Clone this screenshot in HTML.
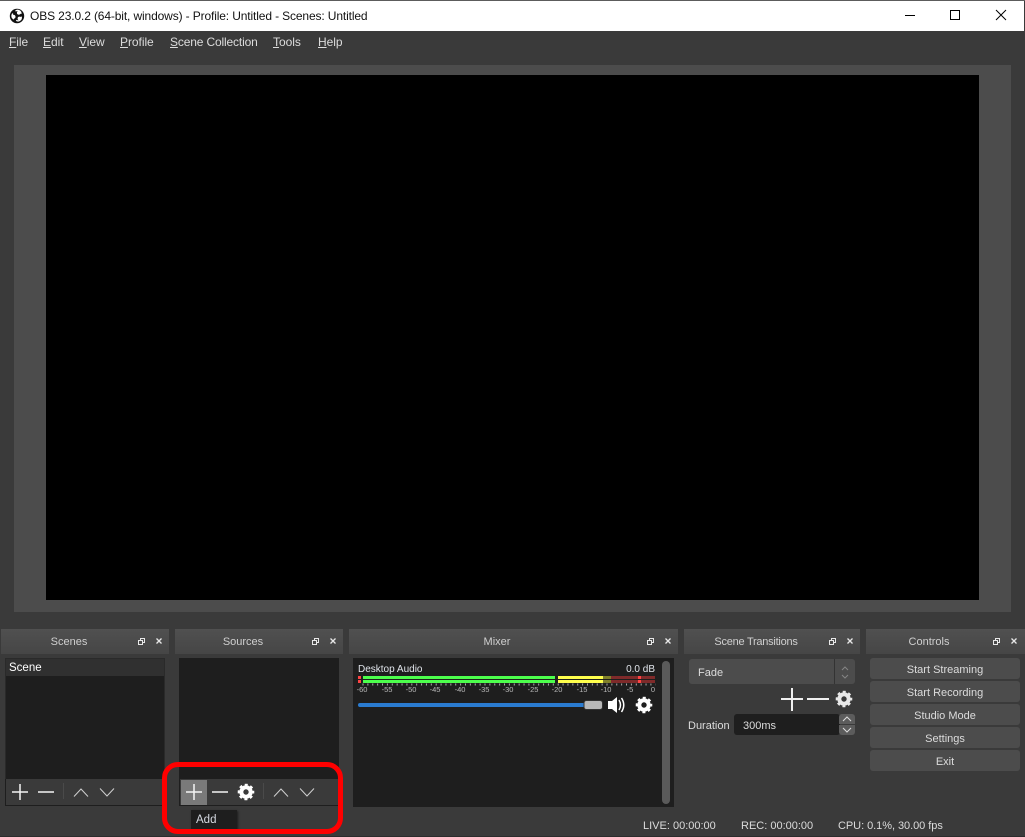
<!DOCTYPE html>
<html><head><meta charset="utf-8"><style>
*{box-sizing:border-box}
html,body{margin:0;padding:0;width:1025px;height:837px;overflow:hidden;background:#3a3a3a}
body{position:relative;font:11px "Liberation Sans",sans-serif;color:#dcdcdc}
.a{position:absolute}
.t{position:absolute;white-space:nowrap;line-height:14px}
.dock{position:absolute;top:629px;height:25px;background:linear-gradient(#505050,#464646);text-align:center;line-height:27px;color:#cfcfcf}
.list{position:absolute;background:#1e1e1e}
.tb{position:absolute;background:#3a3a3a;border:1px solid #1e1e1e;border-top:0;height:27px}
.btn{position:absolute;left:870px;width:150px;height:21px;background:#4c4c4c;border-radius:3px;text-align:center;line-height:24px;color:#dcdcdc}
.m{font-size:12px;top:35px;letter-spacing:-.05px}
svg{position:absolute;overflow:visible}
</style></head><body>
<!-- title bar -->
<div class="a" style="left:0;top:0;width:1025px;height:1px;background:#5c5c5c"></div>
<div class="a" style="left:0;top:1px;width:1024px;height:30px;background:#fff"></div>
<div class="a" style="left:0;top:836px;width:1025px;height:1px;background:#2c2c2c"></div>
<svg style="left:9px;top:8px" width="16" height="16" viewBox="0 0 16 16"><circle cx="8" cy="8" r="7.200" fill="#111"/>
<g fill="none" stroke="#fff" stroke-width="1.300"><path d="M6.500 3.200a3.300 3.300 0 0 1 5.500 2.600"/><path d="M12.200 8.700a3.300 3.300 0 0 1-5 3.600"/><path d="M5 11a3.300 3.300 0 0 1-1-5.400"/></g>
<circle cx="9.800" cy="4.800" r="1.900" fill="#fff"/><circle cx="10.500" cy="10.500" r="1.900" fill="#fff"/><circle cx="4.600" cy="8.800" r="1.900" fill="#fff"/></svg>
<div class="t" style="left:30px;top:9px;color:#111;font-size:12px;letter-spacing:-.13px">OBS 23.0.2 (64-bit, windows) - Profile: Untitled - Scenes: Untitled</div>
<svg style="left:0;top:0" width="1025" height="31"><path d="M905 15.500h10" stroke="#000"/><rect x="950.500" y="10.500" width="9" height="9" fill="none" stroke="#000"/><path d="M996 10l10 10M1006 10l-10 10" stroke="#000"/></svg>
<!-- menu -->
<div class="t m" style="left:9px"><u>F</u>ile</div>
<div class="t m" style="left:43px"><u>E</u>dit</div>
<div class="t m" style="left:79px"><u>V</u>iew</div>
<div class="t m" style="left:120px"><u>P</u>rofile</div>
<div class="t m" style="left:170px;letter-spacing:-.15px"><u>S</u>cene Collection</div>
<div class="t m" style="left:273px"><u>T</u>ools</div>
<div class="t m" style="left:318px"><u>H</u>elp</div>
<!-- preview -->
<div class="a" style="left:14px;top:65px;width:997px;height:547px;background:#4c4c4c"></div>
<div class="a" style="left:46px;top:75px;width:933px;height:525px;background:#000"></div>
<!-- dock titles -->
<div class="dock" style="left:1px;width:168px;padding-right:32px">Scenes</div>
<div class="dock" style="left:175px;width:168px;padding-right:32px">Sources</div>
<div class="dock" style="left:349px;width:329px;padding-right:33px">Mixer</div>
<div class="dock" style="left:684px;width:176px;padding-right:32px;letter-spacing:-.25px">Scene Transitions</div>
<div class="dock" style="left:866px;width:159px;padding-right:33px">Controls</div>
<svg style="left:0;top:0" width="1025" height="660" fill="none" stroke="#e8e8e8">
<g><path d="M140.500 640.500v-2h4v4h-2M138.500 640.500h4v4h-4z"/><path d="M156.500 638.500l5 5M161.500 638.500l-5 5" stroke-width="1.300"/></g>
<g transform="translate(174)"><path d="M140.500 640.500v-2h4v4h-2M138.500 640.500h4v4h-4z"/><path d="M156.500 638.500l5 5M161.500 638.500l-5 5" stroke-width="1.300"/></g>
<g transform="translate(509)"><path d="M140.500 640.500v-2h4v4h-2M138.500 640.500h4v4h-4z"/><path d="M156.500 638.500l5 5M161.500 638.500l-5 5" stroke-width="1.300"/></g>
<g transform="translate(691)"><path d="M140.500 640.500v-2h4v4h-2M138.500 640.500h4v4h-4z"/><path d="M156.500 638.500l5 5M161.500 638.500l-5 5" stroke-width="1.300"/></g>
<g transform="translate(855)"><path d="M140.500 640.500v-2h4v4h-2M138.500 640.500h4v4h-4z"/><path d="M156.500 638.500l5 5M161.500 638.500l-5 5" stroke-width="1.300"/></g>
</svg>
<!-- scenes -->
<div class="list" style="left:5px;top:658px;width:160px;height:121px;border:1px solid #2a2a2a;border-bottom:0"></div>
<div class="a" style="left:6px;top:659px;width:158px;height:17px;background:#303030"></div>
<div class="t" style="left:9px;top:661px;color:#fff;font-size:11.500px">Scene</div>
<div class="tb" style="left:5px;top:779px;width:160px"></div>
<!-- sources -->
<div class="list" style="left:179px;top:658px;width:160px;height:121px"></div>
<div class="tb" style="left:179px;top:779px;width:160px"></div>
<div class="a" style="left:181px;top:780px;width:26px;height:25px;background:#7a7a7a"></div>
<svg style="left:0;top:770px" width="350" height="40" fill="none" stroke="#e8e8e8">
<path d="M12 22h16M20 14v16M38 22h16" stroke="#f4f4f4" stroke-width="1.500"/>
<path d="M74 26.500l7-7.500 7 7.500M100 18.500l7 7.500 7-7.500" stroke="#d0d0d0"/>
<path d="M63.500 13v16" stroke="#4a4a4a"/>
<path d="M186 22h16M194 14v16M212 22h16" stroke="#f4f4f4" stroke-width="1.500"/>
<path d="M274 26.500l7-7.500 7 7.500M300 18.500l7 7.500 7-7.500" stroke="#d0d0d0"/>
<path d="M263.500 13v16" stroke="#4a4a4a"/>
<g transform="translate(246 22)"><circle r="4.700" stroke="#fff" stroke-width="4"/><circle r="7" stroke="#fff" stroke-width="2.600" stroke-dasharray="2.900 2.600" stroke-dashoffset="1.450"/></g>
</svg>
<!-- tooltip -->
<div class="a" style="left:191px;top:810px;width:46px;height:21px;background:#1e1e1e;box-shadow:1px 1px 2px rgba(0,0,0,.5)"></div>
<div class="t" style="left:196px;top:813px;color:#d4d8e0;font-size:11.500px">Add</div>
<!-- red box -->
<div class="a" style="left:162px;top:762px;width:181px;height:72px;border:5px solid #f00;border-radius:16px"></div>
<!-- mixer -->
<div class="list" style="left:353px;top:658px;width:321px;height:149px"></div>
<div class="a" style="left:662px;top:661px;width:8px;height:143px;background:#5a5a5a;border-radius:4px"></div>
<div class="t" style="left:358px;top:663px;font-size:10px;color:#e0e4ea">Desktop Audio</div>
<div class="t" style="right:370px;top:663px;font-size:10px;color:#e0e4ea">0.0 dB</div>
<svg style="left:0;top:0" width="1025" height="720" fill="none">
<g><rect x="358" y="676" width="3" height="3" fill="#f44"/><rect x="363" y="676" width="192" height="3" fill="#4cff4c"/><rect x="558" y="676" width="45" height="3" fill="#ffff4c"/><rect x="603" y="676" width="8" height="3" fill="#80802a"/><rect x="611" y="676" width="44" height="3" fill="#7f2a2a"/><rect x="638" y="676" width="3" height="3" fill="#f44"/></g>
<g transform="translate(0 4)"><rect x="358" y="676" width="3" height="3" fill="#f44"/><rect x="363" y="676" width="192" height="3" fill="#4cff4c"/><rect x="558" y="676" width="45" height="3" fill="#ffff4c"/><rect x="603" y="676" width="8" height="3" fill="#80802a"/><rect x="611" y="676" width="44" height="3" fill="#7f2a2a"/><rect x="638" y="676" width="3" height="3" fill="#f44"/></g>
<path d="M362.500 684.500h293" stroke="#aaa" stroke-width="2" stroke-dasharray="1 3.880"/>
<g font-family="Liberation Sans" font-size="7.500" fill="#b8b8b8" text-anchor="middle">
<text x="362" y="692">-60</text><text x="387" y="692">-55</text><text x="411" y="692">-50</text><text x="435" y="692">-45</text><text x="460" y="692">-40</text><text x="484" y="692">-35</text><text x="508" y="692">-30</text><text x="533" y="692">-25</text><text x="557" y="692">-20</text><text x="582" y="692">-15</text><text x="606" y="692">-10</text><text x="630" y="692">-5</text><text x="653" y="692">0</text></g>
<rect x="358" y="703" width="228" height="4" rx="2" fill="#2a7bd0"/>
<rect x="584" y="700.500" width="18.500" height="9" rx="2.500" fill="#b8b8b8" stroke="#333"/>
<path d="M608 701h4l5-4v16l-5-4h-4z" fill="#fff"/><path d="M619 700q3 5 0 10M621.500 698q4.500 7 0 14" stroke="#fff" stroke-width="1.500"/>
<g transform="translate(644 705)"><circle r="4.700" stroke="#fff" stroke-width="4"/><circle r="7" stroke="#fff" stroke-width="2.600" stroke-dasharray="2.900 2.600" stroke-dashoffset="1.450"/></g>
</svg>
<!-- transitions -->
<div class="a" style="left:689px;top:659px;width:166px;height:25px;background:#4c4c4c;border-radius:3px"></div>
<div class="a" style="left:834px;top:659px;width:1px;height:25px;background:#333"></div>
<div class="t" style="left:698px;top:666px">Fade</div>
<div class="t" style="left:688px;top:719px;font-size:11px">Duration</div>
<div class="a" style="left:734px;top:714px;width:106px;height:21px;background:#1e1e1e;border-radius:3px"></div>
<div class="t" style="left:743px;top:719px">300ms</div>
<div class="a" style="left:839px;top:714px;width:16px;height:10px;background:#5c5c5c;border-radius:3px 3px 0 0"></div>
<div class="a" style="left:839px;top:725px;width:16px;height:10px;background:#5c5c5c;border-radius:0 0 3px 3px"></div>
<svg style="left:0;top:0" width="1025" height="740" fill="none">
<path d="M842 670l3-3 3 3M842 675l3 3 3-3" stroke="#858585"/>
<path d="M781 699h22M792 688v23M807 699h22" stroke="#f0f0f0" stroke-width="2"/>
<g transform="translate(844 699)"><circle r="4.700" stroke="#e8e8e8" stroke-width="4"/><circle r="7" stroke="#e8e8e8" stroke-width="2.600" stroke-dasharray="2.900 2.600" stroke-dashoffset="1.450"/></g>
<path d="M843 721l4-4 4 4M843 728l4 4 4-4" stroke="#ddd"/>
</svg>
<!-- controls -->
<div class="btn" style="top:658px">Start Streaming</div>
<div class="btn" style="top:681px">Start Recording</div>
<div class="btn" style="top:704px">Studio Mode</div>
<div class="btn" style="top:727px">Settings</div>
<div class="btn" style="top:750px">Exit</div>
<!-- status -->
<div class="t" style="left:643px;top:819px">LIVE: 00:00:00</div>
<div class="t" style="left:741px;top:819px">REC: 00:00:00</div>
<div class="t" style="left:838px;top:819px;letter-spacing:-.05px">CPU: 0.1%, 30.00 fps</div>
</body></html>
